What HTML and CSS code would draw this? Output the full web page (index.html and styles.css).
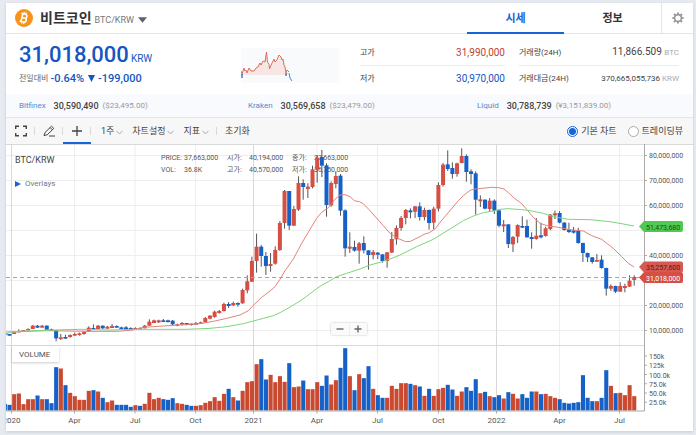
FILE: index.html
```
<!DOCTYPE html>
<html lang="ko">
<head>
    <meta charset="UTF-8">
    <meta name="viewport" content="width=device-width, initial-scale=1.0">
    <title>비트코인 BTC/KRW</title>
    <link rel="stylesheet" href="styles.css">
</head>
<body>

<main class="panel">
    <header class="header">
        <svg class="coin" viewBox="0 0 18 18" aria-hidden="true">
            <circle cx="9" cy="9" r="9" fill="#f7931a"/>
            <g transform="rotate(13 9 9)" fill="none" stroke="#fff">
                <path d="M6.9 4.8V13.2M5.5 5H9.6a1.8 1.8 0 0 1 0 3.9H7M9.6 8.9a2 2 0 0 1 0 4.1H5.5" stroke-width="1.6"/>
                <path d="M8 3V5M10 3V5M8 13V15M10 13V15" stroke-width="1.1"/>
            </g>
        </svg>
        <h1>비트코인</h1>
        <span class="pair">BTC/KRW</span>
        <button class="coin-select" aria-label="코인 선택"><svg viewBox="0 0 10 6"><path d="M0 0H10L5 6Z" fill="#596273"/></svg></button>
        <nav class="tabs">
            <a class="tab active" href="#price">시세</a>
            <a class="tab" href="#info">정보</a>
        </nav>
        <button class="settings" aria-label="설정">
            <svg viewBox="0 0 12 12" fill="none" stroke="#999">
                <circle cx="6" cy="6" r="3.4" stroke-width="1.6"/>
                <path d="M6 0.4V2.4M6 9.6V11.6M0.4 6H2.4M9.6 6H11.6M2 2L3.5 3.5M8.5 8.5L10 10M10 2L8.5 3.5M3.5 8.5L2 10" stroke-width="1.9"/>
            </svg>
        </button>
    </header>

    <section class="summary">
        <div class="now">
            <div class="price">31,018,000<small>KRW</small></div>
            <div class="change"><span>전일대비</span> -0.64% <svg viewBox="0 0 7 7"><path d="M0 0H7L3.5 7Z" fill="#1556c0"/></svg> -199,000</div>
        </div>
        <svg class="spark" viewBox="0 0 98 35" aria-hidden="true">
            <rect width="98" height="35" fill="#f8fafc"/>
            <path d="M0 27L3 20L6 25L8 20L13 23L18 16L20 15L23 15L25 5L27 16L29 21L33 12L36 14L39 8L43 12L44 22V27Z" fill="#f7e6e4"/>
            <path d="M0 23L1 26L3 20L4 23L5 22L6 25L8 20L10 23H13L15 20L17 19L19 15L20 17L22 13L24 14L25.5 4L26.5 14L28 16L28.5 21L31 15L33 11L34 14L36 12L38 7L40 9L41 12L42 11L43 17L44 19L45 25L46 22L48 24" fill="none" stroke="#d9705f"/>
            <path d="M0.5 26L1 30L1.5 26M44.5 25L45 28L46 25M48 25L49 30L51 33" fill="none" stroke="#4a86d8"/>
        </svg>
        <dl class="stats">
            <div><dt>고가</dt><dd class="up">31,990,000</dd></div>
            <div><dt>저가</dt><dd class="down">30,970,000</dd></div>
        </dl>
        <dl class="stats stats-24h">
            <div><dt>거래량(24H)</dt><dd>11,866.509 <small>BTC</small></dd></div>
            <div><dt>거래대금(24H)</dt><dd class="long">370,665,055,736 <small>KRW</small></dd></div>
        </dl>
    </section>

    <section class="exchanges">
        <div><a href="#bitfinex">Bitfinex</a><b>30,590,490</b><span>($23,495.00)</span></div>
        <div><a href="#kraken">Kraken</a><b>30,569,658</b><span>($23,479.00)</span></div>
        <div><a href="#liquid">Liquid</a><b>30,788,739</b><span>(¥3,151,839.00)</span></div>
    </section>

    <div class="toolbar">
        <button class="tool" aria-label="전체화면"><svg viewBox="0 0 12 12"><path d="M.7 4V1.2H4M8 1.2H11.3V4M11.3 8V10.8H8M4 10.8H.7V8" stroke-width="1.4"/></svg></button>
        <button class="tool" aria-label="그리기"><svg viewBox="0 0 12 12"><path d="M1 10.5L2 7.5L8.5 1.2L10.8 3.4L4.2 9.8ZM7.2 2.6L9.4 4.8M6 11H12"/></svg></button>
        <button class="tool active" aria-label="십자선"><svg viewBox="0 0 12 12"><path d="M6 1V11M1 6H11" stroke-width="1.3"/></svg></button>
        <div class="menus">
            <button>1주<svg viewBox="0 0 7 5"><path d="M.5.8L3.5 4L6.5.8"/></svg></button>
            <button>차트설정<svg viewBox="0 0 7 5"><path d="M.5.8L3.5 4L6.5.8"/></svg></button>
            <button>지표<svg viewBox="0 0 7 5"><path d="M.5.8L3.5 4L6.5.8"/></svg></button>
        </div>
        <button class="reset">초기화</button>
        <div class="chart-type">
            <label><input type="radio" name="chart" checked>기본 차트</label>
            <label><input type="radio" name="chart">트레이딩뷰</label>
        </div>
    </div>

    <section class="chart">
        <svg id="chart" viewBox="6 144 687 287"></svg>
        <div class="legend">
            <h2>BTC/KRW</h2>
            <button><svg viewBox="0 0 6 6"><path d="M0 0L6 3L0 6Z" fill="#1c5fd0"/></svg>Overlays</button>
        </div>
        <div class="zoom">
            <button aria-label="축소"><svg viewBox="0 0 8 8"><path d="M.5 4H7.5"/></svg></button>
            <button aria-label="확대"><svg viewBox="0 0 8 8"><path d="M.5 4H7.5M4 .5V7.5"/></svg></button>
        </div>
    </section>
</main>

<script src="chart.js"></script>
</body>
</html>
```
FILE: styles.css
```
* {
    box-sizing: border-box;
}
body {
    margin: 0;
    padding: 3px 3px 4px 6px;
    background-color: #e7ebf1;
    color: #444;
    font-family: Roboto, "Noto Sans CJK KR", sans-serif;
    font-size: 9px;
    line-height: 12px;
}
h1, h2, dl, dd {
    margin: 0;
}
button {
    padding: 0;
    border: none;
    background: none;
    color: inherit;
    font: inherit;
    cursor: pointer;
}
a {
    text-decoration: none;
}
svg {
    display: block;
}
.panel {
    background-color: #fff;
    box-shadow: 0 1px 3px rgba(60, 80, 110, 0.2);
}

/* header */
.header {
    display: flex;
    align-items: center;
    height: 31px;
    padding-left: 9px;
    border-bottom: 1px solid #e5e5e5;
}
.coin {
    width: 18px;
    height: 18px;
}
h1 {
    margin: 0 3px 0 7px;
    font-size: 14px;
    line-height: 18px;
    color: #333;
}
.pair {
    padding-top: 4px;
    color: #777;
}
.coin-select {
    margin: 3px 0 0 4px;
}
.coin-select svg {
    width: 9px;
    height: 6px;
}
.tabs {
    display: flex;
    align-self: stretch;
    margin-left: auto;
}
.tab {
    width: 97px;
    height: 31px;
    color: #333;
    font-size: 11px;
    font-weight: bold;
    line-height: 32px;
    text-align: center;
}
.tab.active {
    border-bottom: 2px solid #1763d8;
    color: #1763d8;
}
.settings {
    align-self: stretch;
    width: 32px;
    border-left: 1px solid #e5e5e5;
}
.settings svg {
    width: 12px;
    height: 12px;
    margin: auto;
}

/* price summary */
.summary {
    display: grid;
    grid-template-columns: 222fr 119fr 145fr 174fr;
    height: 60px;
    padding: 5px 14px 0 13px;
}
.price {
    margin-top: 3px;
    color: #1556c0;
    font-size: 22px;
    font-weight: 500;
    line-height: 26px;
}
.price small {
    margin-left: 2px;
    font-size: 10px;
    font-weight: normal;
}
.change {
    display: flex;
    align-items: center;
    gap: 4px;
    height: 13px;
    color: #1556c0;
    font-size: 11px;
    font-weight: 500;
}
.change span {
    margin-right: -2px;
    color: #666;
    font-size: 8px;
    font-weight: normal;
}
.change svg {
    width: 7px;
    height: 7px;
    margin-right: -1px;
}
.spark {
    width: 98px;
    height: 35px;
    margin-top: 9px;
}
.stats div {
    display: flex;
    align-items: center;
    justify-content: space-between;
    height: 26px;
    font-size: 8px;
}
.stats div:first-child {
    height: 27px;
    padding-top: 1px;
    border-bottom: 1px solid #e9ebed;
}
.stats-24h {
    margin-left: 14px;
}
.stats dd {
    font-size: 10px;
}
.stats .long {
    font-size: 8px;
}
.stats small {
    color: #aaa;
    font-size: 8px;
}
.stats .up {
    color: #c2412d;
}
.stats .down {
    color: #1556c0;
}

/* other exchanges */
.exchanges {
    display: grid;
    grid-template-columns: repeat(3, 1fr);
    align-items: center;
    height: 24px;
    border-bottom: 1px solid #e2e4e6;
    background-color: #f8fafd;
}
.exchanges div {
    display: flex;
    gap: 8px;
    padding-left: 13px;
    font-size: 8px;
}
.exchanges a {
    color: #5489cc;
}
.exchanges b {
    font-size: 9px;
    font-weight: 500;
}
.exchanges span {
    margin-left: -4px;
    color: #999;
}

/* toolbar */
.toolbar {
    display: flex;
    align-items: center;
    height: 26px;
    padding: 0 10px 0 1px;
    background-color: #f7f7f7;
}
.toolbar svg {
    fill: none;
    stroke: #444;
}
.tool {
    position: relative;
    width: 28px;
    height: 26px;
}
.tool svg {
    width: 12px;
    height: 12px;
    margin: auto;
}
.tool.active {
    padding-top: 2px;
    border-bottom: 2px solid #1763d8;
}
.tool::after, .menus::after {
    content: "";
    position: absolute;
    top: 9px;
    right: 0;
    width: 1px;
    height: 8px;
    background-color: #d8d8d8;
}
.menus {
    position: relative;
    display: flex;
    align-items: center;
    gap: 9px;
    height: 26px;
    padding: 0 8px 0 10px;
}
.menus button {
    display: flex;
    align-items: center;
    gap: 2px;
}
.menus svg {
    width: 7px;
    height: 5px;
    margin-top: 2px;
    stroke: #aaa;
}
.reset {
    margin-left: 8px;
}
.chart-type {
    display: flex;
    gap: 11px;
    margin-left: auto;
}
.chart-type label {
    display: flex;
    align-items: center;
    gap: 3px;
}
.chart-type input {
    appearance: none;
    width: 11px;
    height: 11px;
    margin: 0;
    border: 1px solid #aaa;
    border-radius: 50%;
    background-color: #fff;
}
.chart-type input:checked {
    border-color: #1763d8;
    background: radial-gradient(circle, #1763d8 3px, #fff 4px);
}

/* chart */
.chart {
    position: relative;
}
.chart > svg {
    width: 100%;
    font-size: 7px;
    fill: #555;
}
.grid {
    stroke: #eee;
}
.year {
    stroke: #d9d9d9;
}
.axis {
    fill: none;
    stroke: #aaa;
}
.current {
    stroke: #e08c85;
    stroke-dasharray: 4 3;
}
.wick {
    stroke: #555;
}
.rise {
    fill: #d54f45;
}
.fall {
    fill: #1561c8;
}
.volume .rise {
    fill: #c94a30;
}
.ma-short, .ma-long {
    fill: none;
    stroke: #e5827b;
}
.ma-long {
    stroke: #7bd67b;
}
.month, .volume-title {
    font-size: 8px;
}
.month {
    text-anchor: middle;
}
.box {
    fill: #fff;
    filter: drop-shadow(0 1px 1px rgba(0, 0, 0, 0.2));
}
.legend {
    position: absolute;
    top: 10px;
    left: 9px;
}
.legend h2 {
    font-size: 9px;
    font-weight: normal;
}
.legend button {
    display: flex;
    align-items: center;
    gap: 4px;
    margin-top: 12px;
    color: #777;
    font-size: 8px;
}
.legend svg {
    width: 6px;
    height: 6px;
}
.zoom {
    position: absolute;
    left: 47%;
    bottom: 96px;
    display: flex;
    margin-left: 2px;
    background-color: #fafafa;
    box-shadow: 0 0 2px rgba(0, 0, 0, 0.25);
}
.zoom button {
    width: 18px;
    height: 12px;
}
.zoom button + button {
    border-left: 1px solid #eee;
}
.zoom svg {
    width: 8px;
    height: 8px;
    margin: auto;
    stroke: #666;
    stroke-width: 1.4;
}
```
FILE: chart.js
```
// weekly candles: direction, body top, body bottom, wick top, wick bottom, volume
// heights are in thirds of a chart unit
const candles = `
b 580 585 580 585 20|b 582 587 582 587 17|r 577 582 573 582 49|r 573 577 568 577 51|r 570 576 570 576 19
r 567 571 565 571 34|r 557 567 555 567 34|b 557 563 555 564 45|r 557 563 555 563 34|b 557 569 556 569 34
b 568 572 566 572 22|b 571 595 571 604 130|r 592 597 582 600 126|b 591 596 584 596 76|r 585 591 583 593 53
r 582 587 578 587 43|r 580 585 578 587 32|r 575 582 574 584 32|r 563 575 559 575 59|b 564 568 553 568 61
r 557 567 555 567 57|b 557 565 556 567 38|r 560 566 558 566 25|r 558 564 552 564 30|b 558 563 556 563 17
b 562 567 560 567 17|b 562 568 558 570 17|b 564 569 562 569 11|r 564 568 562 568 16|b 565 568 562 568 14
r 557 565 555 565 20|r 545 557 538 557 53|r 541 549 539 549 34|r 541 547 539 549 38|b 541 546 537 546 34
b 541 546 539 548 32|b 542 553 540 555 37|r 553 557 551 559 22|r 549 554 546 556 20|b 549 554 549 556 17
b 551 555 551 557 14|r 549 554 546 554 14|r 547 552 545 552 16|r 534 547 531 548 23|r 527 536 525 538 28
r 515 531 512 533 40|r 513 519 510 521 29|r 492 513 488 515 50|b 492 498 486 504 65|r 489 496 485 498 40
b 489 494 487 500 30|r 450 490 446 491 59|r 424 451 406 460 85|r 363 425 350 426 88|r 320 363 281 398 139
b 320 348 315 380 154|b 348 378 336 405 93|r 372 378 339 395 107|r 330 371 319 374 85|r 249 330 243 333 103
r 153 249 150 266 86|b 153 257 153 270 142|r 207 257 198 258 70|r 129 209 109 213 72|b 129 141 118 179 90
r 140 147 130 174 64|r 88 141 77 145 64|r 53 89 45 128 85|b 51 77 30 111 74|b 76 195 70 230 105
r 129 196 124 200 78|r 108 132 96 145 91|b 107 212 102 227 128|b 211 325 208 350 187|r 320 326 277 339 103
b 321 332 302 335 61|r 310 332 306 371 109|b 309 331 289 340 97|b 331 345 331 389 133|r 336 345 330 358 65
b 338 344 336 357 46|b 343 363 343 368 38|r 337 363 336 383 38|r 297 338 276 339 74|r 264 298 256 314 65
r 234 264 228 272 82|r 210 234 207 253 82|b 211 217 205 235 80|r 199 215 198 234 76|b 199 231 187 242 72
r 210 231 203 241 44|b 210 249 208 269 65|r 206 248 200 268 44|r 135 206 127 214 64|r 74 135 69 140 68
b 73 87 31 93 77|b 84 102 67 116 63|r 70 102 68 110 44|r 48 69 25 70 57|b 48 96 43 125 70
b 94 102 88 133 59|b 100 179 94 224 94|r 178 184 166 201 52|b 179 206 178 208 56|r 182 207 174 216 43
b 182 212 178 222 40|b 211 257 211 262 46|r 253 259 240 276 36|b 253 312 253 324 55|r 291 313 288 336 50
r 255 290 253 309 36|b 258 263 229 264 49|b 258 292 239 293 38|b 291 297 277 326 57|r 287 297 234 299 57
b 286 292 248 295 49|r 265 288 260 290 50|r 224 267 222 271 43|r 220 226 212 237 38|b 219 248 213 250 34
b 248 270 246 272 23|b 269 276 248 279 21|b 271 278 261 281 23|b 272 309 263 311 25|b 309 339 308 366 106
b 339 352 338 366 38|b 352 366 351 371 28|r 360 365 342 366 28|b 359 384 346 386 38|b 384 446 383 467 121
r 438 446 433 452 74|b 438 455 437 459 52|r 438 455 427 456 53|r 438 444 431 457 46|r 422 440 406 441 76
r 411 420 406 437 43`.trim().split(/[|\n]/).map(row => row.split(' '));

const maShort = [[18,576],[60,575],[140,572],[260,574],[350,574],[400,570],[430,562],[490,558],[540,555],[600,551],[640,544],[680,535],[720,525],[745,512],[760,496],[785,472],[810,453],[825,440],[840,418],[855,392],[880,357],[905,310],[930,268],[950,235],[965,217],[985,203],[1005,178],[1020,165],[1035,164],[1050,170],[1063,182],[1078,185],[1090,191],[1110,212],[1150,257],[1170,280],[1185,290],[1200,298],[1217,305],[1232,304],[1245,297],[1260,290],[1272,283],[1288,278],[1305,267],[1320,247],[1350,212],[1375,182],[1390,167],[1410,151],[1425,147],[1455,144],[1475,142],[1495,143],[1512,147],[1525,158],[1540,172],[1565,191],[1580,208],[1600,232],[1620,250],[1645,258],[1670,261],[1710,269],[1750,273],[1775,287],[1805,298],[1840,325],[1865,350],[1885,370],[1902,381]];
const maLong = [[18,583],[30,576],[60,574],[130,571],[240,568],[330,570],[400,568],[560,568],[630,565],[680,560],[730,551],[760,543],[790,535],[820,527],[840,518],[860,507],[900,483],[920,469],[950,446],[965,436],[985,425],[1010,410],[1040,400],[1080,387],[1110,375],[1140,367],[1170,357],[1200,345],[1250,320],[1300,298],[1350,267],[1390,242],[1420,228],[1450,218],[1480,213],[1500,208],[1525,206],[1565,209],[1590,212],[1630,220],[1660,230],[1705,238],[1770,239],[1830,245],[1870,252],[1902,258]];

const months = [[11.5, '2020', 1], [74.5, 'Apr'], [135, 'Jul'], [195.5, 'Oct'], [253.5, '2021', 1], [317, 'Apr'], [377.5, 'Jul'], [438.5, 'Oct'], [496.5, '2022', 1], [559.5, 'Apr'], [619.5, 'Jul']];

const base = 410.5;
const y = v => 140 + v / 3;
const line = points => points.map(p => (p[0] / 3) + ',' + y(p[1])).join(' ');
let svg = '';

// grid and axis labels
for (let i = 0; i < 8; i++) {
    const gy = 155.5 + i * 25;
    svg += `<path class="grid" d="M6 ${gy}H644"/><path class="axis" d="M644 ${gy}h3"/>`;
    // the price tags cover 50m and 30m
    svg += i === 3 || i === 5 ? '' : `<text x="649" y="${gy + 2}">${80 - i * 10},000,000</text>`;
}
months.forEach(([x, name, year]) => {
    svg += `<path class="${year ? 'year' : 'grid'}" d="M${x} 144V${base}"/><path class="axis" d="M${x} ${base}v3"/>`;
    svg += `<text class="month" x="${x}" y="423">${name}</text>`;
});
['150k', '125k', '100.0k', '75.0k', '50.0k', '25.0k'].forEach((name, i) => {
    const ty = 356 + i * 9.25;
    svg += `<path class="axis" d="M644 ${ty}h3"/><text x="649" y="${ty + 3}">${name}</text>`;
});
svg += '<path class="year" d="M6 144.5H693M6 345.5H644"/>';

// ohlc of the hovered week
[[161, 'PRICE:', '37,663,000', 'VOL:', '36.8K', 184], [227, '시가:', '40,194,000', '고가:', '40,570,000', 249], [292, '종가:', '37,663,000', '저가:', '36,750,000', 314]].forEach(c => {
    svg += `<text x="${c[0]}" y="160">${c[1]}</text><text x="${c[5]}" y="160">${c[2]}</text>`;
    svg += `<text x="${c[0]}" y="172">${c[3]}</text><text x="${c[5]}" y="172">${c[4]}</text>`;
});

// candles and volume
let volume = '';
candles.forEach(([dir, top, bottom, high, low, vol], i) => {
    const x = 634.2 - (candles.length - 1 - i) * 4.662;
    const cls = dir === 'r' ? 'rise' : 'fall';
    const left = Math.max(6, x - 2);
    svg += `<path class="wick" d="M${x} ${y(high)}V${y(low)}"/>`;
    svg += `<rect class="${cls}" x="${left}" y="${y(top)}" width="${x + 2 - left}" height="${(bottom - top) / 3}"/>`;
    volume += `<rect class="${cls}" x="${left}" y="${base - vol / 3}" width="${x + 2.1 - left}" height="${vol / 3}"/>`;
});
svg += `<g class="volume">${volume}</g>`;
svg += `<polyline class="ma-short" points="${line(maShort)}"/><polyline class="ma-long" points="${line(maLong)}"/>`;
svg += '<path class="current" d="M6 277.5H644"/>';
svg += `<path class="axis" d="M6 ${base + 0.5}H644.5V144"/>`;
svg += '<rect class="box" x="12" y="346" width="47" height="16"/><text class="volume-title" x="19" y="357">VOLUME</text>';

// price tags on the axis
[[226.5, '51,473,680', '#4fc94f', '#234b23'], [267, '35,257,600', '#d75a52', '#4d1d1a'], [277.5, '31,018,000', '#d54f45', '#fff']].forEach(([ty, text, bg, fg]) => {
    svg += `<path d="M639 ${ty}l5 -5.5H681q2 0 2 2v7q0 2 -2 2H644Z" fill="${bg}"/>`;
    svg += `<text x="646" y="${ty + 3}" fill="${fg}">${text}</text>`;
});

document.getElementById('chart').innerHTML = svg;
```
